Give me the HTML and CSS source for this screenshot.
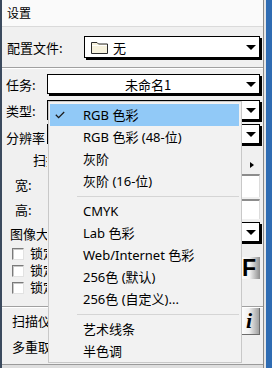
FILE: index.html
```html
<!DOCTYPE html>
<html lang="zh-CN">
<head>
    <meta charset="UTF-8">
    <meta name="viewport" content="width=device-width, initial-scale=1.0">
    <title>设置</title>
    <link rel="stylesheet" href="styles.css">
</head>
<body>
    <div class="screen">
        <div class="window">
            <div class="titlebar">设置</div>

            <div class="panel">
                <div class="row row-profile">
                    <span class="label">配置文件:</span>
                    <div class="combo combo-profile">
                        <svg class="folder" width="17" height="13" viewBox="0 0 17 13">
                            <path d="M0.5 12.5V1.5H6L7.5 3H16.5V12.5Z" fill="#f6f1dc" stroke="#2b2b2b"/>
                            <path d="M1 4.5H16" stroke="#ffffff"/>
                        </svg>
                        <span class="value">无</span>
                        <span class="arrow"></span>
                    </div>
                </div>

                <div class="divider"></div>

                <div class="row row-task">
                    <span class="label">任务:</span>
                    <div class="combo">
                        <span class="task-name">未命名1</span>
                        <span class="arrow"></span>
                    </div>
                </div>

                <div class="row row-type">
                    <span class="label">类型:</span>
                    <div class="combo"><span class="arrow"></span></div>
                </div>

                <div class="row row-res">
                    <span class="label">分辨率</span>
                    <div class="combo"><span class="arrow"></span></div>
                </div>

                <div class="row row-scan">
                    <span class="label label-scan"><span class="clip clip-scan">扫描:</span></span>
                    <span class="arrow-right"></span>
                </div>

                <div class="row row-width">
                    <span class="label label-size">宽:</span>
                    <div class="field"></div>
                </div>

                <div class="row row-height">
                    <span class="label label-size">高:</span>
                    <div class="field field-short"></div>
                </div>

                <div class="row row-image">
                    <span class="label label-image"><span class="clip clip-image">图像大小</span></span>
                    <div class="combo"><span class="arrow"></span></div>
                </div>

                <div class="options">
                    <div class="checks">
                        <div class="check"><span class="box"></span><span class="clip clip-check">锁定比例</span></div>
                        <div class="check"><span class="box"></span><span class="clip clip-check">锁定宽度</span></div>
                        <div class="check"><span class="box"></span><span class="clip clip-check">锁定高度</span></div>
                    </div>
                    <div class="btn-font">F</div>
                </div>

                <div class="divider"></div>

                <div class="row row-scanner">
                    <span class="label label-wide"><span class="clip clip-wide">扫描仪</span></span>
                    <div class="btn-info">i</div>
                </div>

                <div class="row row-multi">
                    <span class="label label-wide"><span class="clip clip-wide">多重取样</span></span>
                </div>
            </div>

            <div class="window-foot"></div>

            <div class="menu">
                <div class="menu-item active">
                    <svg class="check-mark" width="10" height="8" viewBox="0 0 10 8">
                        <path d="M0.8 3.8L3.6 6.6L9.2 1" fill="none" stroke="#1b1b1b" stroke-width="1.3"/>
                    </svg>
                    RGB 色彩
                </div>
                <div class="menu-item">RGB 色彩 (48-位)</div>
                <div class="menu-item">灰阶</div>
                <div class="menu-item">灰阶 (16-位)</div>
                <div class="menu-sep"></div>
                <div class="menu-item">CMYK</div>
                <div class="menu-item">Lab 色彩</div>
                <div class="menu-item">Web/Internet 色彩</div>
                <div class="menu-item">256色 (默认)</div>
                <div class="menu-item">256色 (自定义)...</div>
                <div class="menu-sep"></div>
                <div class="menu-item">艺术线条</div>
                <div class="menu-item">半色调</div>
            </div>
        </div>
        <div class="edge"></div>
    </div>
</body>
</html>
```

FILE: styles.css
```css
* {
    box-sizing: border-box;
}
body {
    margin: 0;
    font-family: "Noto Sans CJK SC", "Noto Sans", sans-serif;
    font-size: 13px;
    color: #000;
    background-color: #2f6cb3;
}
.screen {
    display: flex;
    width: 272px;
    height: 368px;
    overflow: hidden;
}
.window {
    position: relative;
    display: flex;
    flex-direction: column;
    flex: none;
    width: 264px;
    height: 368px;
    background-color: #f0f0f0;
    border-left: 2px solid #3b4a5e;
    border-right: 1px solid #8a8a8a;
}
.edge {
    flex: 1;
    background: linear-gradient(to right, #e6e6e6 0 2px, #2f6cb3 2px);
}
.titlebar {
    flex: none;
    height: 27px;
    padding-left: 5px;
    line-height: 26px;
    font-size: 12px;
    background-color: #fafafa;
    border-bottom: 1px solid #dadada;
}
.panel {
    flex: 1;
    display: flex;
    flex-direction: column;
    padding: 0 3px 0 4px;
}
.row {
    display: flex;
    align-items: center;
    flex: none;
    height: 22px;
    white-space: nowrap;
}
.label {
    flex: none;
    width: 41px;
    line-height: 1;
}
/* labels that run under the open menu are cut at its left edge */
.clip {
    display: inline-block;
    overflow: hidden;
    white-space: nowrap;
    vertical-align: top;
    line-height: 1.15;
}
.clip-scan {
    width: 14px;
}
.clip-image {
    width: 37px;
}
.clip-check {
    width: 17px;
}
.clip-wide {
    width: 36px;
}
.row-profile {
    margin-top: 9px;
    height: 24px;
    align-items: flex-start;
}
.row-profile .label {
    width: 77px;
    margin-left: 1px;
    margin-top: 5px;
}
.row-task {
    margin-top: 5px;
    align-items: flex-start;
}
.row-type {
    margin-top: 4px;
    align-items: flex-start;
}
.row-res {
    margin-top: 2px;
    align-items: flex-start;
}
.row-task .label,
.row-type .label {
    margin-top: 4px;
}
.row-res .label {
    margin-top: 7px;
}
.row-scan {
    height: 28px;
}
.label-scan {
    margin-left: 27px;
}
.row-width {
    height: 24px;
    align-items: flex-start;
}
.row-height {
    margin-top: 1px;
    align-items: flex-start;
}
.row-image {
    margin-top: 1px;
    align-items: flex-start;
}
.label-size {
    width: 54px;
    margin-left: 9px;
    margin-top: 4px;
}
.label-image {
    width: 60px;
    margin-left: 4px;
    margin-top: 5px;
}
.combo {
    display: flex;
    align-items: center;
    flex: 1;
    height: 20px;
    background-color: #fff;
    border: 1px solid #000;
    box-shadow: 2px 2px 0 #000;
}
.combo-profile {
    height: 22px;
    padding-left: 6px;
}
.folder {
    flex: none;
}
.value {
    margin-left: 5px;
}
.task-name {
    flex: 1;
    text-align: center;
    padding-left: 2px;
}
.arrow {
    flex: none;
    width: 0;
    height: 0;
    margin-left: auto;
    margin-right: 3px;
    border-left: 5px solid transparent;
    border-right: 5px solid transparent;
    border-top: 5px solid #000;
}
.arrow-right {
    width: 0;
    height: 0;
    margin-left: auto;
    margin-right: 6px;
    margin-top: 10px;
    border-top: 3.5px solid transparent;
    border-bottom: 3.5px solid transparent;
    border-left: 4px solid #000;
}
.field {
    flex: 1;
    height: 23px;
    background-color: #fff;
    border-top: 2px solid #8c8c8c;
    border-left: 2px solid #8c8c8c;
    border-right: 1px solid #dcdcdc;
}
.field-short {
    height: 20px;
}
.divider {
    flex: none;
    height: 2px;
    margin: 7px -3px 0 -4px;
    border-top: 1px solid #a0a0a0;
    border-bottom: 1px solid #fff;
}
.options {
    display: flex;
    justify-content: space-between;
    flex: none;
    height: 60px;
}
.options + .divider {
    margin-top: 2px;
}
.checks {
    padding-top: 1px;
    padding-left: 6px;
}
.check {
    display: flex;
    align-items: center;
    gap: 6px;
    height: 17px;
    white-space: nowrap;
    line-height: 1;
}
.box {
    flex: none;
    width: 12px;
    height: 12px;
    background-color: #fff;
    border: 1px solid;
    border-color: #7a7a7a #e2e2e2 #e2e2e2 #7a7a7a;
    box-shadow: inset 1px 1px 0 #c8c8c8;
}
.btn-font {
    width: 19px;
    height: 22px;
    margin-top: 13px;
    padding-left: 1px;
    font-family: "Liberation Sans", sans-serif;
    font-weight: bold;
    font-size: 23px;
    line-height: 23px;
    background: linear-gradient(to right, #fff 0%, #f2f2f2 45%, #8e8e8e 100%);
}
.row-scanner {
    height: 27px;
    justify-content: space-between;
}
.label-wide {
    margin-left: 6px;
    width: auto;
}
.btn-info {
    width: 19px;
    height: 27px;
    padding-left: 5px;
    font-family: "Liberation Serif", serif;
    font-weight: bold;
    font-style: italic;
    font-size: 22px;
    line-height: 26px;
    background: linear-gradient(to right, #fff 0%, #f0f0f0 45%, #a0a0a0 100%);
    border-right: 1px solid #6c6c6c;
    border-bottom: 1px solid #6c6c6c;
}
.row-multi {
    margin-top: 1px;
}
.window-foot {
    flex: none;
    height: 4px;
    background-color: #dedede;
    border-top: 1px solid #9a9a9a;
}
.menu {
    position: absolute;
    left: 46px;
    top: 101px;
    width: 194px;
    height: 262px;
    padding: 2px 2px 0 1px;
    font-family: "Noto Sans", "Noto Sans CJK SC", sans-serif;
    font-size: 13px;
    background-color: #f2f2f2;
    border: 1px solid #c8c8c8;
}
.menu-item {
    position: relative;
    height: 22px;
    line-height: 22px;
    padding-left: 33px;
    white-space: nowrap;
}
.menu-item.active {
    background-color: #91c9f7;
}
.check-mark {
    position: absolute;
    left: 5px;
    top: 7px;
}
.menu-sep {
    height: 1px;
    margin: 4px 0 3px 27px;
    background-color: #d5d5d5;
}
```
